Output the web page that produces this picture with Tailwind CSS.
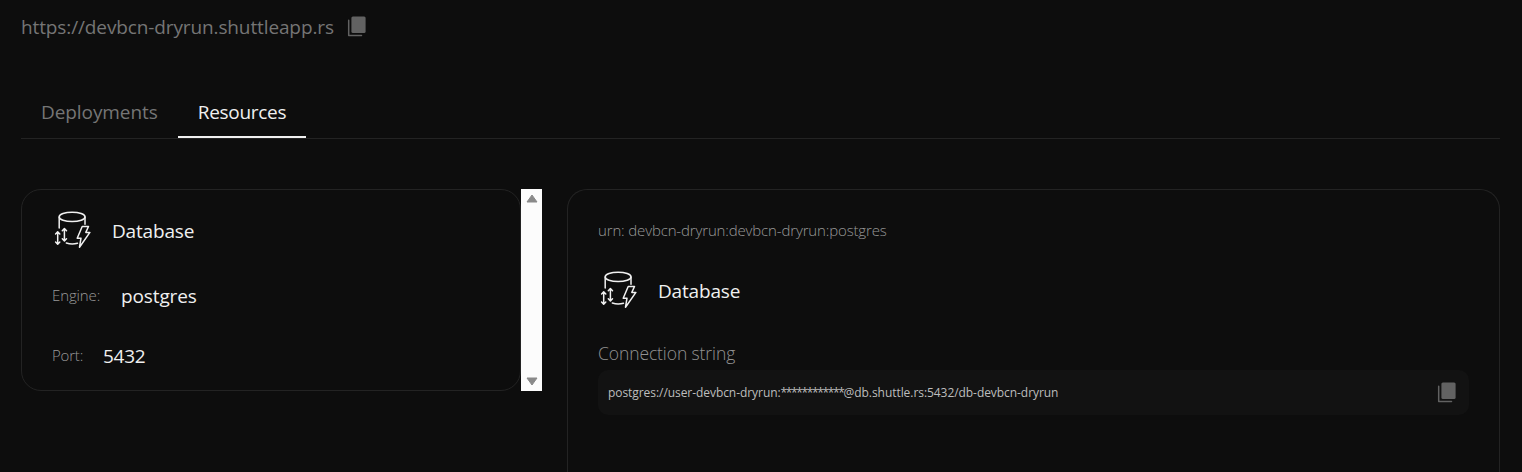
<!DOCTYPE html>
<html lang="en">
<head>
<meta charset="utf-8">
<title>Resources</title>
<script src="https://cdn.jsdelivr.net/npm/@tailwindcss/browser@4"></script>
</head>
<body class="h-[472px] overflow-hidden bg-[#0d0d0d] pl-[21px] pr-[22px] font-['Open_Sans','Noto_Sans',sans-serif] text-[19px] leading-7 text-[#f0f0f0]">
<svg class="hidden">
  <symbol id="db" viewBox="0 0 40 40" fill="none" stroke="currentColor" stroke-width="1.5" stroke-linejoin="round" stroke-linecap="round">
    <ellipse cx="20.1" cy="6.9" rx="12.9" ry="4.7"/>
    <path d="M7.2 7v11M33 7v7.3M14.3 33c3.2 1 8.300 1 11.200 .2"/>
    <path d="M5.700 22v12M3.600 24l2.100-2.200L7.800 24M3.600 32l2.100 2.200L7.800 32M12.400 18.700v12M10.300 20.700l2.100-2.200 2.100 2.200M10.300 28.700l2.100 2.200 2.100-2.200"/>
    <path d="M30.200 16.500h6.300l-2.700 5.900h4.100l-10.400 14.800 1.500-9h-3.800z"/>
  </symbol>
  <symbol id="copy" viewBox="0 0 20 22">
    <rect x="4.400" y=".4" width="14.200" height="16.500" rx="1.500" fill="currentColor"/>
    <path d="M1.700 4.300V19.600H14.500" fill="none" stroke="currentColor" stroke-width="1.500" stroke-linejoin="round" stroke-linecap="round"/>
  </symbol>
</svg>

<header class="flex h-[53px] items-center gap-[13px] text-[#757575]">
  <span class="w-[313px] whitespace-nowrap tracking-[-0.12px]">https://devbcn-dryrun.shuttleapp.rs</span>
  <svg class="h-[22px] w-5 text-[#626262]"><use href="#copy"/></svg>
</header>

<nav class="mt-[35px] flex h-[51px] border-b border-[#232323] whitespace-nowrap">
  <a class="w-[157px] pt-[10px] pl-[20px] text-[#757575] tracking-[-0.08px]">Deployments</a>
  <a class="h-[50px] w-32 border-b-2 border-[#f0f0f0] pt-[10px] text-center tracking-[-0.3px]">Resources</a>
</nav>

<main class="mt-[50px] flex items-start">
  <div class="flex h-[202px] w-[521px]">
    <section class="w-[500px] rounded-[20px] border border-[#232323] px-[30px] pt-5">
      <div class="flex h-10 items-center">
        <svg class="size-10"><use href="#db"/></svg>
        <h2 class="ml-5 pt-[2px] tracking-[-0.17px]">Database</h2>
      </div>
      <div class="mt-[31px] flex h-[30px] items-center">
        <span class="w-[69px] pb-[2px] text-[15px] font-light tracking-[-0.12px] text-[#999]">Engine:</span>
        <span class="tracking-[-0.12px]">postgres</span>
      </div>
      <div class="mt-[30px] flex h-[30px] items-center">
        <span class="w-[51px] pb-[2px] text-[15px] font-light tracking-[-0.2px] text-[#999]">Port:</span>
        <span class="tracking-[-0.25px]">5432</span>
      </div>
    </section>
    <div class="flex w-[21px] flex-col items-center justify-between bg-[#fcfcfc] py-[5px]">
      <svg class="h-[9px] w-[12px]" viewBox="0 0 12 9"><path d="M6 1L11 8H1z" fill="#8a8a8a" stroke="#8a8a8a" stroke-linejoin="round"/></svg>
      <svg class="h-[9px] w-[12px]" viewBox="0 0 12 9"><path d="M6 8L11 1H1z" fill="#8a8a8a" stroke="#8a8a8a" stroke-linejoin="round"/></svg>
    </div>
  </div>

  <section class="ml-[25px] h-[283px] w-[933px] rounded-t-[20px] border border-b-0 border-[#232323] px-[30px] pt-[25px]">
    <p class="h-[31px] text-[15px] leading-[30px] font-light tracking-[-0.15px] text-[#999]">urn: devbcn-dryrun:devbcn-dryrun:postgres</p>
    <div class="mt-6 flex h-10 items-center">
      <svg class="size-10"><use href="#db"/></svg>
      <h2 class="ml-5 pt-[2px] tracking-[-0.17px]">Database</h2>
    </div>
    <p class="mt-[28px] h-[32px] text-[17.5px] leading-[30px] font-light tracking-[-0.1px] text-[#929292]">Connection string</p>
    <div class="flex h-[45px] items-center justify-between rounded-[10px] bg-[#121212] pr-[12px] pl-[10px]">
      <code class="font-['Open_Sans','Noto_Sans',sans-serif] text-[12px] whitespace-nowrap tracking-[-0.06px] text-[#bdbdbd]">postgres://user-devbcn-dryrun:<span class="tracking-[-1.36px]">************</span>@db.shuttle.rs:5432/db-devbcn-dryrun</code>
      <svg class="h-[22px] w-5 text-[#626262]"><use href="#copy"/></svg>
    </div>
  </section>
</main>
</body>
</html>
